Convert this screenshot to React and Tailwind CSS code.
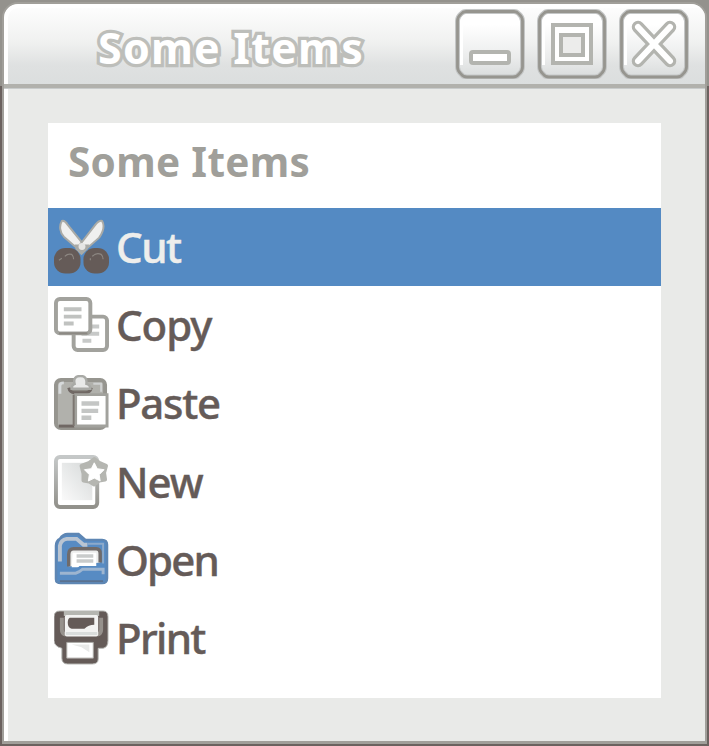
import React from 'react';

const svg = 'block h-[55px] w-[55px] shrink-0 -translate-y-px';

function CutIcon() {
  return (
    <svg viewBox="0 0 56 56" className={svg}>
      <path d="M8 2 C5 7 6 14 10 18 L26 32 L31 27 L14 6 Q11 1 8 2Z" fill="#f0f0ef" stroke="#a9aaa6" strokeWidth="2" />
      <path d="M49 2 C52 7 50 13 46 19 L30 33 L25 28 L42 6 Q46 1 49 2Z" fill="#f0f0ef" stroke="#a9aaa6" strokeWidth="2" />
      <path d="M21 26 L36 26 L34 31 L28 37 L22 31Z" fill="#a9aaa6" />
      <circle cx="28.5" cy="28" r="3.500" fill="#e6e6e4" />
      <rect x="0" y="29.500" width="27" height="26" rx="11.500" fill="#655b58" />
      <rect x="30" y="29.500" width="26" height="26" rx="11.500" fill="#655b58" />
      <path d="M11 38 Q14 35 18 36 Q20 38 20 41 M5 42 L8 40 M39 38 Q43 34 48 36 Q50 38 50 41 M37 42 V40" fill="none" stroke="#8c8782" strokeWidth="1.200" />
    </svg>
  );
}

function CopyIcon() {
  return (
    <svg viewBox="0 0 56 56" className={svg}>
      <rect x="20" y="20" width="34" height="34" rx="4" fill="#fff" stroke="#a2a29d" strokeWidth="4" />
      <path d="M28 30 H46 M28 37.500 H46 M29 44.500 H38" stroke="#c7c9c8" strokeWidth="4" />
      <rect x="2" y="2" width="35" height="35" rx="4" fill="#fff" stroke="#a2a29d" strokeWidth="4" />
      <path d="M5 37 H34" stroke="#8c8983" strokeWidth="2" />
      <path d="M10 12.500 H28 M10 20 H28 M10 27 H20" stroke="#c0c2c0" strokeWidth="4" />
    </svg>
  );
}

function PasteIcon() {
  return (
    <svg viewBox="0 0 56 56" className={svg}>
      <rect x="2" y="5" width="50" height="49" rx="5" fill="#b1b1ac" stroke="#96958f" strokeWidth="4" />
      <path d="M5 52 H21" stroke="#706864" strokeWidth="3" />
      <path d="M6 19 V11 Q6 8 10 8" fill="none" stroke="#d7dadb" strokeWidth="3" />
      <path d="M40 9 H48 V17" fill="none" stroke="#cfd1d1" strokeWidth="2" />
      <path d="M15 13 Q16 18 21 18 H32 Q37 18 38 13" fill="#8c8983" stroke="#706864" strokeWidth="3" />
      <path d="M18 14 Q18 10 21 9 Q19 1 27 1 Q34 1 33 9 Q37 10 37 14Z" fill="#e8e9e8" stroke="#a9aaa6" strokeWidth="2.5" />
      <path d="M22 20 H54 V52 H22Z" fill="#fff" stroke="#a2a29d" strokeWidth="3" />
      <path d="M20 20 V52" stroke="#7c7671" strokeWidth="2" />
      <path d="M28 29 H46 M28 36.500 H45 M28 43.500 H38" stroke="#c4c6c5" strokeWidth="4.500" />
    </svg>
  );
}

function NewIcon() {
  return (
    <svg viewBox="0 0 56 56" className={svg}>
      <defs>
        <linearGradient id="page" x2="0" y2="1"><stop stopColor="#c5c8c8" /><stop offset="1" stopColor="#92918b" /></linearGradient>
        <linearGradient id="paper" x1="1" x2="0" y2="1"><stop stopColor="#d5d8d8" /><stop offset="1" stopColor="#fafafa" /></linearGradient>
      </defs>
      <rect x="2" y="3" width="42" height="51" rx="4" fill="#fff" stroke="url(#page)" strokeWidth="4" />
      <rect x="8" y="9" width="31" height="38" fill="url(#paper)" />
      <path d="M41 5 L46 9 L53 12 L51 19 L52 26 L46 27 L41 31 L36 28 L30 27 V20 L28 12 L36 9Z" fill="#b5b6b1" stroke="#b5b6b1" strokeWidth="4" strokeLinejoin="round" />
      <path d="M41 9 L44 15 L51 16 L46 21 L47 27.500 L41 24.500 L35 27.500 L36 21 L31 16 L38 15Z" fill="#fff" stroke="#fff" strokeWidth="1" strokeLinejoin="round" />
    </svg>
  );
}

function OpenIcon() {
  return (
    <svg viewBox="0 0 56 56" className={svg}>
      <path d="M2 14 Q2 9 6 7 Q9 2 14 2 H25 L32 8 H49 Q54 8 54 13 V47 Q54 52 49 52 H7 Q2 52 2 48Z" fill="#578bc3" stroke="#5e86b3" strokeWidth="2.500" />
      <path d="M6 30 V14 Q7 8 13 7 H23 L30 13 H34" fill="none" stroke="#bac5d2" strokeWidth="4" />
      <path d="M34 12 H50 V32" fill="none" stroke="#8daacb" strokeWidth="2" />
      <path d="M15 35 V23 Q15 17 20 17 H43 Q47 17 47 22 V31" fill="#ecedec" stroke="#706b6a" strokeWidth="3.500" />
      <path d="M19 21 H43 V36 H18Z" fill="#fff" />
      <path d="M23 24.500 H40 M23 29.500 H40" stroke="#c9cbcb" strokeWidth="3.500" />
      <path d="M4 38 H19 Q23 38 26 34.500 H52 V47 Q51 50 47 50 H8 Q4 50 4 46Z" fill="#578bc3" />
      <path d="M6 42 H22 Q26 41 29 38 H50 V43" fill="none" stroke="#9db5d0" strokeWidth="3" />
      <path d="M6 50 H50" stroke="#5a718f" strokeWidth="2" />
    </svg>
  );
}

function PrintIcon() {
  return (
    <svg viewBox="0 0 56 56" className={svg}>
      <path d="M6 1 H50 Q55 1 55 7 V31 Q55 38 50 39 H45 V50 Q45 55 39 55 H14 Q8 55 8 49 V39 Q0 37 0 31 V7 Q0 1 6 1Z" fill="#655b58" stroke="#b9bab7" strokeWidth="1" />
      <path d="M10 1 H46 V6 H10Z" fill="#b5b6b1" />
      <path d="M8 8 V20 Q8 24 12 25 M48 8 V20 Q48 24 44 25" fill="none" stroke="#96918c" strokeWidth="4" />
      <rect x="11" y="5" width="34" height="22" rx="2" fill="#f3f3f2" />
      <path d="M12 24 H44" stroke="#dadddc" strokeWidth="3" />
      <path d="M16 8 H41 V15 Q35 15 31 19 H18 Q14 18 14 13 Q14 9 16 8Z" fill="#655b58" />
      <path d="M13 33 H40 V49 H13Z" fill="#fff" stroke="#aaa8a4" strokeWidth="1" />
      <path d="M18 35 H36 V43 L28 38Z" fill="#e8e9e8" />
    </svg>
  );
}

const items = [
  ['Cut', CutIcon, 'tracking-[-1.5px]'],
  ['Copy', CopyIcon, 'tracking-[-1.1px]'],
  ['Paste', PasteIcon, 'tracking-[-1.3px]'],
  ['New', NewIcon, 'tracking-[-1.1px]'],
  ['Open', OpenIcon, 'tracking-[-1.9px]'],
  ['Print', PrintIcon, 'tracking-[-1.7px]'],
];

const frame = 'M11 2.500 H59 Q62 2.500 64 5 Q67.500 8 67.500 12 V58 Q67.500 62 64 65 Q62 68 58 68 H12 Q8 68 6 65 Q2.500 62 2.500 58 V12 Q2.500 8 6 5 Q8 2.500 11 2.500Z';

function WindowButton({ label, children }) {
  return (
    <button aria-label={label} className="h-[70px] w-[70px] shrink-0">
      <svg viewBox="0 0 70 70" className="block h-full w-full">
        <defs>
          <linearGradient id="btn" x2="0" y2="1"><stop offset=".2" stopColor="#fff" /><stop offset=".7" stopColor="#ebecec" /><stop offset="1" stopColor="#d9dcdc" /></linearGradient>
        </defs>
        <path d={frame} fill="url(#btn)" stroke="#c5c7c7" strokeWidth="5" />
        <path d={frame} fill="none" stroke="#96958f" strokeWidth="2.800" />
        <path d="M6.500 56 V13 Q7 7 13 6.500 H57" fill="none" stroke="#fff" strokeWidth="3" />
        {children}
      </svg>
    </button>
  );
}

export default function App() {
  return (
    <div className="h-[746px] w-[709px] overflow-hidden bg-[linear-gradient(#94928d_86px,#6b625f_86px)] p-[2px] font-['Noto_Sans',sans-serif]">
      <div className="flex h-[742px] w-[705px] flex-col overflow-hidden rounded-t-[16px] border-x-2 border-t-2 border-b-[3px] border-[#a19f9a] bg-[#e9eae8]">
        <header className="flex h-[80px] shrink-0 border-l-4 border-t-4 border-white bg-[linear-gradient(#fdfdfd,#f0f1f0_45%,#dfe1e1_75%,#dbdede)] rounded-tl-[14px]">
          <h1 className="ml-[90px] mt-[9px] w-[357px] text-[43px] font-bold leading-[61px] tracking-[1.2px] whitespace-nowrap text-white [-webkit-text-stroke:6.5px_#bdbeba] [paint-order:stroke_fill] [stroke-linejoin:round]">Some Items</h1>
          <div className="mt-px flex gap-3">
            <WindowButton label="Minimize">
              <rect x="16" y="43" width="38" height="11" rx="2" fill="#fff" stroke="#b3b4af" strokeWidth="4" />
            </WindowButton>
            <WindowButton label="Maximize">
              <rect x="16" y="16" width="38" height="38" fill="#fff" stroke="#b3b4af" strokeWidth="4" />
              <rect x="24" y="26" width="22" height="20" fill="#ececeb" stroke="#b3b4af" strokeWidth="4" />
            </WindowButton>
            <WindowButton label="Close">
              <path d="M19 18 L51 52 M51 18 L19 52" stroke="#b3b4af" strokeWidth="12.500" strokeLinecap="round" />
              <path d="M19 18 L51 52 M51 18 L19 52" stroke="#fff" strokeWidth="6" strokeLinecap="round" />
            </WindowButton>
          </div>
        </header>
        <div className="h-[5px] shrink-0 border-b border-[#c8cbcb] bg-[#b1b1ac]" />
        <main className="min-h-0 flex-1 border-l-4 border-white pl-10 pt-[34px]">
          <section className="h-[575px] w-[613px] bg-white">
            <h2 className="h-[85px] pl-5 pt-px text-[40.500px] font-bold leading-[75px] tracking-[0.3px] whitespace-nowrap text-[#a09f9a]">Some Items</h2>
            <ul>
              {items.map(([name, Icon, tracking], i) => (
                <li key={name} className={'flex h-[78.300px] items-center pl-1.5 ' + (i === 0 ? 'bg-[#548ac3] text-[#eeeeec]' : 'text-[#655b58]')}>
                  <Icon />
                  <span className={'ml-[7px] -mt-px text-[42px] leading-[76px] font-medium whitespace-nowrap [-webkit-text-stroke:0.4px_currentColor] ' + tracking}>{name}</span>
                </li>
              ))}
            </ul>
          </section>
        </main>
      </div>
    </div>
  );
}
